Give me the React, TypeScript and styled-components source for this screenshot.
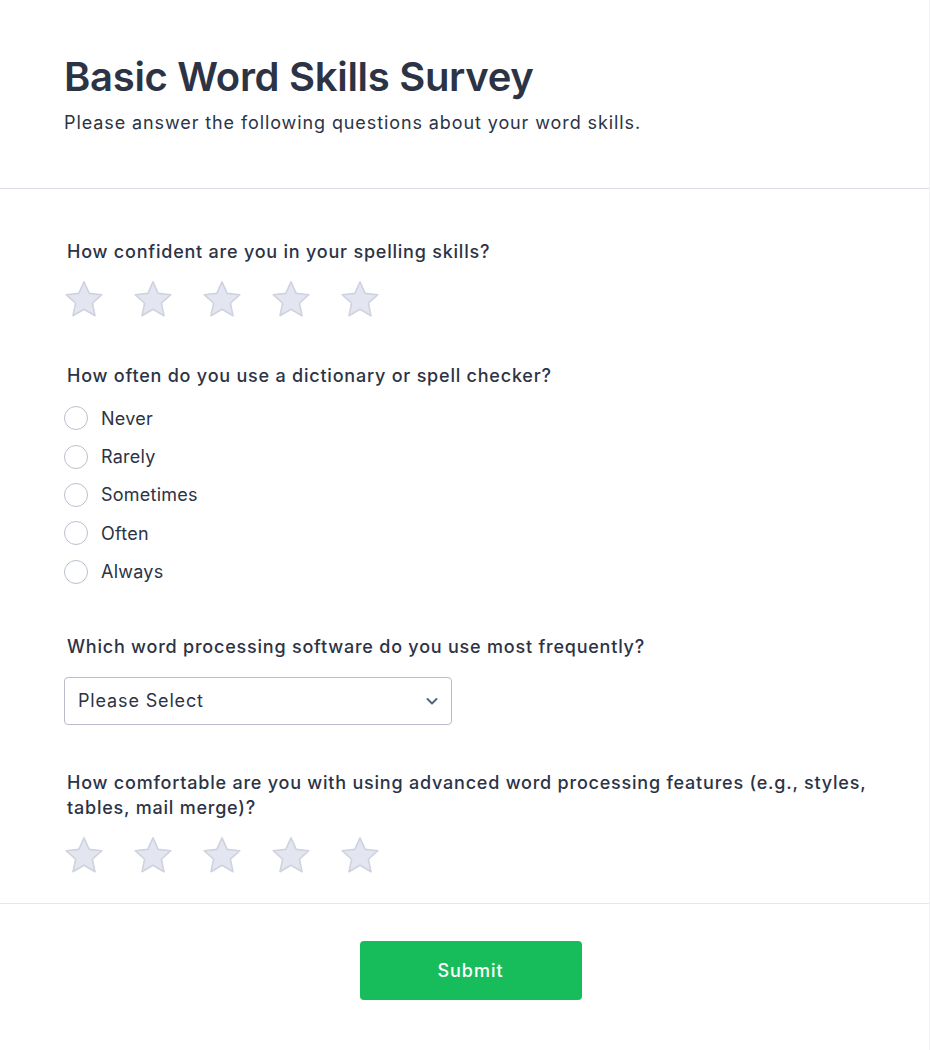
import React from "react";
import styled, { createGlobalStyle } from "styled-components";

const GlobalStyle = createGlobalStyle`
  html, body { margin: 0; padding: 0; background: #ffffff; }
  body { font-family: Inter, "Noto Sans", sans-serif; color: #2c3345; }
  * { box-sizing: border-box; }
`;

const Page = styled.div`
  width: 930px;
  min-height: 1050px;
  background: #ffffff;
  border-right: 1px solid #f1f1f4;
`;

const Header = styled.header`
  padding: 54px 64px 52px;
  border-bottom: 1px solid #dcdde8;
`;

const Title = styled.h1`
  margin: 0;
  font-size: 40px;
  line-height: 46px;
  font-weight: 600;
  letter-spacing: -0.3px;
  color: #2c3345;
`;

const Subtitle = styled.p`
  margin: 9px 0 0;
  font-size: 18px;
  line-height: 27px;
  font-weight: 400;
  letter-spacing: 0.9px;
  color: #2c3345;
`;

const Form = styled.main`
  padding: 50px 50px 27px 64px;
  display: flex;
  flex-direction: column;
  border-bottom: 1px solid #e6e7ee;
`;

const Question = styled.section<{ $space: number }>`
  display: flex;
  flex-direction: column;
  margin-top: ${(p) => p.$space}px;
`;

const Label = styled.div<{ $gap: number }>`
  padding-left: 3px;
  font-size: 18px;
  line-height: 25px;
  font-weight: 500;
  letter-spacing: 0.78px;
  color: #2c3345;
  margin-bottom: ${(p) => p.$gap}px;
`;

const Stars = styled.div`
  display: flex;
  gap: 29px;
`;

const StarBox = styled.span`
  width: 40px;
  height: 40px;
  display: inline-flex;
`;

const RadioList = styled.div`
  display: flex;
  flex-direction: column;
`;

const RadioRow = styled.label`
  display: flex;
  align-items: center;
  height: 38.4px;
  gap: 13px;
  font-size: 18px;
  letter-spacing: 0.25px;
  color: #2c3345;
`;

const RadioCircle = styled.span`
  width: 24px;
  height: 24px;
  border-radius: 50%;
  border: 1.5px solid #b9bfcd;
  background: #fff;
  flex: none;
`;

const Select = styled.div`
  width: 388px;
  height: 48px;
  border: 1px solid #b8bdc9;
  border-radius: 4px;
  display: flex;
  align-items: center;
  justify-content: space-between;
  padding: 0 11px 0 13px;
  font-size: 18px;
  letter-spacing: 0.85px;
  color: #2c3345;
`;

const Footer = styled.footer`
  display: flex;
  justify-content: center;
  padding: 37px 0 40px 12px;
`;

const SubmitButton = styled.button`
  width: 222px;
  height: 59px;
  border: none;
  border-radius: 4px;
  background: #18bd5b;
  color: #ffffff;
  font-family: Inter, "Noto Sans", sans-serif;
  font-size: 18px;
  font-weight: 500;
  letter-spacing: 1px;
  cursor: pointer;
`;

const Star = () => (
  <StarBox>
    <svg width="40" height="40" viewBox="0 0 40 40">
      <path
        d="M20 1.8 L25.17 13.38 L37.8 14.7 L28.37 23.22 L31 35.7 L20 29.3 L9 35.7 L11.63 23.22 L2.2 14.7 L14.83 13.38 Z"
        fill="#e3e6f0"
        stroke="#cfd3de"
        strokeWidth="1.6"
        strokeLinejoin="round"
      />
    </svg>
  </StarBox>
);

const StarRating = () => (
  <Stars>
    {[0, 1, 2, 3, 4].map((i) => (
      <Star key={i} />
    ))}
  </Stars>
);

const Chevron = () => (
  <svg width="16" height="16" viewBox="0 0 16 16">
    <path d="M3.5 6 L8 10.5 L12.5 6" fill="none" stroke="#57647e" strokeWidth="2" strokeLinecap="round" strokeLinejoin="round" />
  </svg>
);

const options = ["Never", "Rarely", "Sometimes", "Often", "Always"];

export default function App() {
  return (
    <>
      <GlobalStyle />
      <Page>
        <Header>
          <Title>Basic Word Skills Survey</Title>
          <Subtitle>Please answer the following questions about your word skills.</Subtitle>
        </Header>
        <Form>
          <Question $space={0}>
            <Label $gap={16}>How confident are you in your spelling skills?</Label>
            <StarRating />
          </Question>
          <Question $space={43}>
            <Label $gap={11}>How often do you use a dictionary or spell checker?</Label>
            <RadioList>
              {options.map((o) => (
                <RadioRow key={o}>
                  <RadioCircle />
                  {o}
                </RadioRow>
              ))}
            </RadioList>
          </Question>
          <Question $space={43}>
            <Label $gap={18}>Which word processing software do you use most frequently?</Label>
            <Select>
              <span>Please Select</span>
              <Chevron />
            </Select>
          </Question>
          <Question $space={45}>
            <Label $gap={16}>
              How comfortable are you with using advanced word processing features (e.g., styles, tables, mail merge)?
            </Label>
            <StarRating />
          </Question>
        </Form>
        <Footer>
          <SubmitButton>Submit</SubmitButton>
        </Footer>
      </Page>
    </>
  );
}
